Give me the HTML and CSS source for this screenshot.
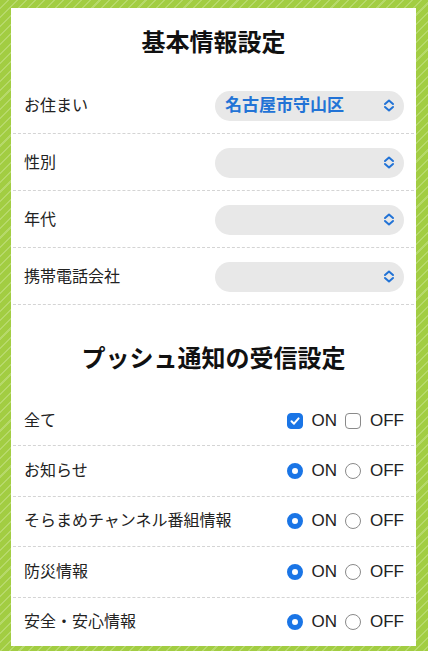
FILE: index.html
```html
<html lang="ja">
<head>
    <meta charset="UTF-8">
    <meta name="viewport" content="width=device-width, initial-scale=1.0">
    <title>設定</title>
    <link rel="stylesheet" href="styles.css">
</head>
<body>
    <div class="card">
        <h2 class="section-title">基本情報設定</h2>
        <div class="row select-row">
            <span class="label">お住まい</span>
            <div class="select">
                <span class="select-value">名古屋市守山区</span>
                <svg class="chevron" width="12" height="13" viewBox="0 0 12 13"><path d="M2 5 L6 1.5 L10 5 M2 8 L6 11.5 L10 8" fill="none" stroke="#2273d6" stroke-width="2" stroke-linecap="round" stroke-linejoin="round"/></svg>
            </div>
        </div>
        <div class="row select-row">
            <span class="label">性別</span>
            <div class="select">
                <span class="select-value"></span>
                <svg class="chevron" width="12" height="13" viewBox="0 0 12 13"><path d="M2 5 L6 1.5 L10 5 M2 8 L6 11.5 L10 8" fill="none" stroke="#2273d6" stroke-width="2" stroke-linecap="round" stroke-linejoin="round"/></svg>
            </div>
        </div>
        <div class="row select-row">
            <span class="label">年代</span>
            <div class="select">
                <span class="select-value"></span>
                <svg class="chevron" width="12" height="13" viewBox="0 0 12 13"><path d="M2 5 L6 1.5 L10 5 M2 8 L6 11.5 L10 8" fill="none" stroke="#2273d6" stroke-width="2" stroke-linecap="round" stroke-linejoin="round"/></svg>
            </div>
        </div>
        <div class="row select-row">
            <span class="label">携帯電話会社</span>
            <div class="select">
                <span class="select-value"></span>
                <svg class="chevron" width="12" height="13" viewBox="0 0 12 13"><path d="M2 5 L6 1.5 L10 5 M2 8 L6 11.5 L10 8" fill="none" stroke="#2273d6" stroke-width="2" stroke-linecap="round" stroke-linejoin="round"/></svg>
            </div>
        </div>

        <h2 class="section-title second">プッシュ通知の受信設定</h2>
        <div class="row toggle-row">
            <span class="label">全て</span>
            <div class="options">
                <span class="check checked">
                    <svg width="12" height="12" viewBox="0 0 12 12"><path d="M2.5 6.2 L5 8.7 L9.6 3.4" fill="none" stroke="#fff" stroke-width="2" stroke-linecap="round" stroke-linejoin="round"/></svg>
                </span>
                <span class="opt">ON</span>
                <span class="check"></span>
                <span class="opt">OFF</span>
            </div>
        </div>
        <div class="row toggle-row">
            <span class="label">お知らせ</span>
            <div class="options">
                <span class="radio checked"></span>
                <span class="opt">ON</span>
                <span class="radio"></span>
                <span class="opt">OFF</span>
            </div>
        </div>
        <div class="row toggle-row">
            <span class="label">そらまめチャンネル番組情報</span>
            <div class="options">
                <span class="radio checked"></span>
                <span class="opt">ON</span>
                <span class="radio"></span>
                <span class="opt">OFF</span>
            </div>
        </div>
        <div class="row toggle-row">
            <span class="label">防災情報</span>
            <div class="options">
                <span class="radio checked"></span>
                <span class="opt">ON</span>
                <span class="radio"></span>
                <span class="opt">OFF</span>
            </div>
        </div>
        <div class="row toggle-row last">
            <span class="label">安全・安心情報</span>
            <div class="options">
                <span class="radio checked"></span>
                <span class="opt">ON</span>
                <span class="radio"></span>
                <span class="opt">OFF</span>
            </div>
        </div>
    </div>
</body>
</html>
```

FILE: styles.css
```css
body {
    margin: 0;
    padding: 8px 12px 0 11px;
    font-family: "Liberation Sans", "Noto Sans CJK JP", sans-serif;
    color: #222222;
    background-color: #a2cd42;
    background-image: repeating-linear-gradient(135deg, #a2cd42 0px, #a2cd42 5px, #b6d96a 5px, #b6d96a 6.5px);
    height: 651px;
    box-sizing: border-box;
    overflow: hidden;
}

.card {
    background-color: #ffffff;
    padding: 0 2px;
}

.section-title {
    margin: 0;
    padding: 17px 0 16px;
    text-align: center;
    font-size: 24px;
    line-height: 36px;
    font-weight: bold;
    color: #111111;
}

.section-title.second {
    padding-top: 36px;
    padding-bottom: 19px;
}

.row {
    display: flex;
    align-items: center;
    justify-content: space-between;
    padding: 0 10px 0 11px;
    border-bottom: 1px dashed #d4d4d4;
    box-sizing: border-box;
}

.label {
    font-size: 16px;
    line-height: 24px;
}

.select-row {
    height: 57px;
    padding-top: 1px;
}

.select {
    width: 189px;
    height: 30px;
    border-radius: 15px;
    background-color: #e8e8e8;
    display: flex;
    align-items: center;
    justify-content: space-between;
    padding: 0 9px 0 10px;
    box-sizing: border-box;
}

.select-value {
    font-size: 17px;
    font-weight: bold;
    color: #2273d6;
    line-height: 24px;
}

.chevron {
    display: block;
}

.toggle-row {
    height: 50.4px;
}

.toggle-row.last {
    border-bottom: none;
    height: 48px;
}

.options {
    display: flex;
    align-items: center;
}

.opt {
    font-size: 17px;
    line-height: 24px;
    margin: 0 8px 0 9px;
    color: #222222;
}

.opt:last-child {
    margin-right: 0;
}

.check {
    width: 16px;
    height: 16px;
    border: 1.5px solid #8a8a8a;
    border-radius: 4px;
    box-sizing: border-box;
    display: flex;
    align-items: center;
    justify-content: center;
}

.check.checked {
    background-color: #1a75e6;
    border-color: #1a75e6;
}

.radio {
    width: 16px;
    height: 16px;
    border: 1.5px solid #8a8a8a;
    border-radius: 50%;
    box-sizing: border-box;
}

.radio.checked {
    border: 5px solid #1a75e6;
    background-color: #ffffff;
}
```
